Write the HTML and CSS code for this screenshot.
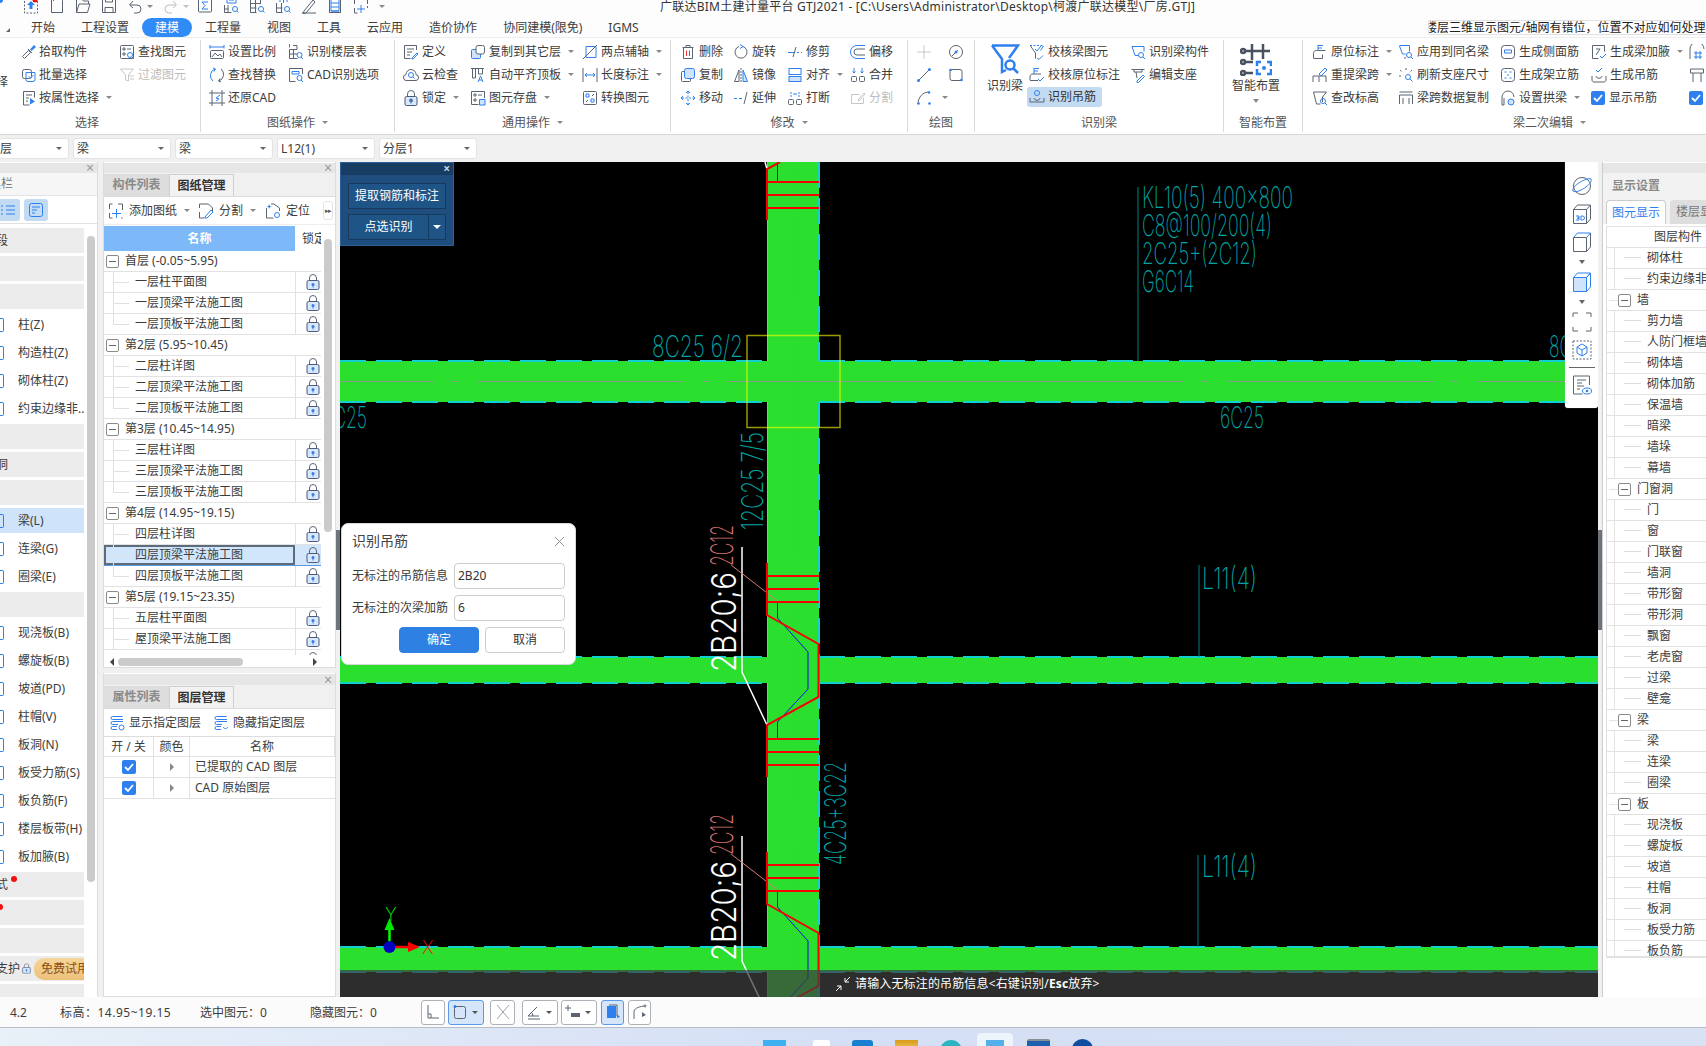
FILE: index.html
```html
<!DOCTYPE html>
<html lang="zh-CN">
<head>
<meta charset="utf-8">
<title>广联达BIM土建计量平台 GTJ2021</title>
<link rel="stylesheet" href="styles.css">
</head>
<body>
<svg class="defs" width="0" height="0">
  <symbol id="lock" viewBox="0 0 14 16"><path d="M3.5 7V4a3.5 3.5 0 0 1 7 0v3" fill="none" stroke="#5c6678"/><rect x="1" y="6.5" width="12" height="9" rx="1.5" fill="#d8e7fb" stroke="#4a5a78"/><circle cx="7" cy="10.5" r="1.5" fill="#2e80ee"/><path d="M7 11v2.5" stroke="#2e80ee"/></symbol>
  <symbol id="chk" viewBox="0 0 14 14"><rect width="14" height="14" rx="2" fill="#2e80ee"/><path d="M3 7l3 3 5-6" fill="none" stroke="#fff" stroke-width="1.8"/></symbol>
</svg>

<header class="top">
  <div class="qa">
    <i class="logo"></i>
    <svg class="q" viewBox="0 0 16 16"><path d="M1.5 3v12h13V3M1.5 3" stroke-dasharray="2 1.5"/><path class="fb" d="M8 3l4 4H9.5v4h-3V7H4z"/><circle class="red" cx="12" cy="2" r="2.5"/></svg>
    <svg class="q" viewBox="0 0 16 16"><path d="M2.5 0v14.5h11V2.5L11 0"/><path class="b" d="M3 1h3M4.5 0v3"/></svg>
    <svg class="q" viewBox="0 0 16 16"><path d="M1.5 14.5V1h5l2 2h5v3M1.5 14.5h11l2.5-8.500H4z"/></svg>
    <svg class="q" viewBox="0 0 16 16"><path d="M1.5 14.5V1h13v13.500zM4 14V9.500h8V14M4.500 1v3h7V1"/></svg>
    <span class="qg"><svg class="q" viewBox="0 0 16 16"><path d="M3 7h7a4 4 0 0 1 0 8H7M6 3L2.500 7 6 10"/></svg><i class="ar"></i></span>
    <span class="qg off"><svg class="q" viewBox="0 0 16 16"><path d="M13 7H6a4 4 0 0 0 0 8h3M10 3l3.500 4L10 10"/></svg><i class="ar"></i></span>
    <svg class="q qs" viewBox="0 0 16 16"><rect x="1.500" y="1" width="13" height="13" rx="1"/><path class="b" d="M11 4H5l3 3.500L5 11h6"/></svg>
    <svg class="q" viewBox="0 0 16 16"><path d="M1.500 7v7.500h7M1.500 11h4M5 7v7"/><path class="b" d="M4 0v5h9V0M6 2h5"/><circle class="b" cx="12" cy="11" r="2.500"/><path class="b" d="M14 13l1.500 1.500"/></svg>
    <svg class="q" viewBox="0 0 16 16"><path d="M1.500 1h10v5M1.500 1v13.500h6M1.500 5.500h10M1.500 10h6M6.500 1v13"/><circle class="b" cx="12" cy="11" r="2.500"/><path class="b" d="M14 13l1.500 1.500"/></svg>
    <svg class="q" viewBox="0 0 16 16"><path d="M1.500 5v9.500h6M1.500 10h6M6.500 5v9"/><path class="b" d="M5 4V0h7v4M8.500 0v5"/><circle class="b" cx="12" cy="11" r="2.500"/><path class="b" d="M14 13l1.500 1.500"/></svg>
    <svg class="q" viewBox="0 0 16 16"><path d="M3 13L12 2l2 2-9 11-3 .5zM1 15h14"/></svg>
    <svg class="q" viewBox="0 0 16 16"><path d="M2.500 0v15M13.500 0v15M2.500 14.500h11"/><path class="b" d="M4 0v13h8V0M4 5h8M4 9h8M4 13h8"/></svg>
    <svg class="q" viewBox="0 0 16 16"><path d="M1.500 6V1h3M14.500 6V1h-3M1.500 10v5h3M14.500 8v2"/><path class="b" d="M8 7v8M4 11h8"/></svg>
    <i class="ar dn"></i>
  </div>
  <div class="title">广联达BIM土建计量平台 GTJ2021 - [C:\Users\Administrator\Desktop\柯渡广联达模型\厂房.GTJ]</div>
</header>

<nav class="menu">
  <i class="corner"></i>
  <div class="tabs">
    <span>开始</span><span>工程设置</span><span class="on">建模</span><span>工程量</span><span>视图</span><span>工具</span><span>云应用</span><span>造价协作</span><span>协同建模(限免)</span><span>IGMS</span>
  </div>
  <div class="notice"><span>楼层三维显示图元/轴网有错位，位置不对应如何处理</span></div>
</nav>

<section class="ribbon">
  <div class="grp g1">
    <div class="body">
      <div class="frag"><span>选择</span></div>
      <div class="col c1">
        <div class="it"><svg class="i" viewBox="0 0 16 16"><path d="M3 14l-1.500-1.500 6-6 2 2-6 6zM7 5l4 4"/><path class="fb" d="M9 5.500l4-4.500 2 2-4.500 4z"/></svg>拾取构件</div>
        <div class="it"><svg class="i" viewBox="0 0 16 16"><rect x="1.500" y="2.500" width="9" height="9" rx="2"/><path class="b" d="M5 5.500h9v7a2 2 0 0 1-2 2H7a2 2 0 0 1-2-2zM7.500 9l2 2 3-3"/></svg>批量选择</div>
        <div class="it"><svg class="i" viewBox="0 0 16 16"><path d="M2.500 15V1.500h11v6M2.500 15h6M5 5h6M5 8h3M5 11h2"/><path class="fb" d="M9 8l5 3.500-5 3z"/></svg>按属性选择<i class="ar"></i></div>
      </div>
      <div class="col">
        <div class="it"><svg class="i" viewBox="0 0 16 16"><rect x="1.500" y="1.500" width="13" height="13" rx="1"/><path d="M4 4h2v2H4zM8 5h4M4 9h2v2H4z"/><circle class="b" cx="11" cy="11" r="2.500"/><path class="b" d="M13 13l2 2"/></svg>查找图元</div>
        <div class="it off"><svg class="i" viewBox="0 0 16 16"><path d="M1.500 2h13l-5 6v6l-3-1V8zM10 9h5M11 12h4"/></svg>过滤图元</div>
      </div>
    </div>
    <div class="lbl">选择</div>
  </div>

  <div class="grp g2">
    <div class="body">
      <div class="col c1">
        <div class="it"><svg class="i" viewBox="0 0 16 16"><path class="b" d="M1 1v3.500M15 1v3.500M1 3h14"/><rect x="1.500" y="6.500" width="13" height="8" rx="1"/><path d="M3 13l3-4 3 3 2-2 2 3"/></svg>设置比例</div>
        <div class="it"><svg class="i" viewBox="0 0 16 16"><path class="b" d="M6 2a7 7 0 0 0-2 12M4 1l2.500 1L5 4.500"/><path d="M10 14a7 7 0 0 0 2-12M12 15l-2.500-1 1.500-2.500"/></svg>查找替换</div>
        <div class="it"><svg class="i" viewBox="0 0 16 16"><path d="M3 0v16M13 0v16M0 3h16M0 13h16"/><path class="b" d="M11 5L7 8l3 1-3 2"/></svg>还原CAD</div>
      </div>
      <div class="col">
        <div class="it"><svg class="i" viewBox="0 0 16 16"><path d="M1.500 5.500v9h8M1.500 10h8M5.500 5.500v9M5 1.500h4v4H1.500"/><circle class="b" cx="11.500" cy="11" r="2.500"/><path class="b" d="M13 13l2 2M1.500 0v3.500"/></svg>识别楼层表</div>
        <div class="it"><svg class="i" viewBox="0 0 16 16"><path d="M14.500 7V1.500h-13v13h6"/><path class="b" d="M4 4.500h7v2.500H4z"/><circle class="b" cx="11.500" cy="11" r="2.500"/><path class="b" d="M13 13l2 2"/></svg>CAD识别选项</div>
      </div>
    </div>
    <div class="lbl">图纸操作<i class="ar"></i></div>
  </div>

  <div class="grp g3">
    <div class="body">
      <div class="col c1">
        <div class="it"><svg class="i" viewBox="0 0 16 16"><path d="M13.500 6V1.500h-12v13h6M4 5h7M4 8h5M4 11h3"/><path class="b" d="M9 14l5-5 1 1-5 5H9z"/></svg>定义</div>
        <div class="it"><svg class="i" viewBox="0 0 16 16"><path d="M4 13.500a3 3 0 0 1-1-6 5 5 0 0 1 10 0 3 3 0 0 1-1 6z"/><circle class="b" cx="8" cy="8" r="2.500"/><path class="b" d="M10 10l1.500 1.500"/></svg>云检查</div>
        <div class="it"><svg class="i" viewBox="0 0 16 16"><use href="#lock"/></svg>锁定<i class="ar"></i></div>
      </div>
      <div class="col c2">
        <div class="it"><svg class="i" viewBox="0 0 16 16"><rect class="b fl" x="1.500" y="5.500" width="9" height="9" rx="1"/><rect class="wf" x="6" y="1.500" width="8.500" height="8.500" rx="2"/></svg>复制到其它层<i class="ar"></i></div>
        <div class="it"><svg class="i" viewBox="0 0 16 16"><path d="M1 1.500h13M2.500 2v9h3V2M8.500 2v5h4V2"/><path class="b" d="M8 15l2.500-6 2.500 6M9 13h3"/></svg>自动平齐顶板<i class="ar"></i></div>
        <div class="it"><svg class="i" viewBox="0 0 16 16"><path d="M14.500 8V1.500h-13v13h7M4 4h2v2H4zM8 5h4M4 9h2v2H4z"/><path class="b fl" d="M9.500 9.500h5.500v5.500H9.500z"/></svg>图元存盘<i class="ar"></i></div>
      </div>
      <div class="col">
        <div class="it"><svg class="i" viewBox="0 0 16 16"><path class="b" d="M4 2.500v11h10v-11z"/><path d="M1 15L15 1"/></svg>两点辅轴<i class="ar"></i></div>
        <div class="it"><svg class="i" viewBox="0 0 16 16"><path d="M1 1v14M15 1v14"/><path class="b" d="M3 8h10M5 6L3 8l2 2M11 6l2 2-2 2"/></svg>长度标注<i class="ar"></i></div>
        <div class="it"><svg class="i" viewBox="0 0 16 16"><rect x="1.500" y="1.500" width="13" height="13" rx="1"/><path class="b" d="M4 4h3v3H4zM9 9h3v3H9z"/><path d="M12 4l-2 2M4 12l2-2"/></svg>转换图元</div>
      </div>
    </div>
    <div class="lbl">通用操作<i class="ar"></i></div>
  </div>

  <div class="grp g4">
    <div class="body">
      <div class="col c1">
        <div class="it"><svg class="i" viewBox="0 0 16 16"><path d="M2.500 3.500h11M6 3V1.500h4V3M3.500 4v10.500h9V4"/><path class="r" d="M6.500 6.500v5.500M9.500 6.500v5.500"/></svg>删除</div>
        <div class="it"><svg class="i" viewBox="0 0 16 16"><rect x="1.500" y="4.500" width="9" height="10" rx="1"/><rect class="b fl" x="4.500" y="1.500" width="10" height="10" rx="2"/></svg>复制</div>
        <div class="it"><svg class="i" viewBox="0 0 16 16"><path class="b" stroke-dasharray="2 1.500" d="M8 2v12M2 8h12"/><path class="b" d="M6 3l2-2 2 2M6 13l2 2 2-2M3 6L1 8l2 2M13 6l2 2-2 2"/></svg>移动</div>
      </div>
      <div class="col c2">
        <div class="it"><svg class="i" viewBox="0 0 16 16"><path d="M10 2.500a6 6 0 1 1-4 0"/><path class="b" d="M7 .5l3 2-3 2"/></svg>旋转</div>
        <div class="it"><svg class="i" viewBox="0 0 16 16"><path d="M6 3L1.500 14.500H6z"/><path class="b fl" d="M10 3l4.500 11.500H10z"/><path d="M8 1v14" stroke-dasharray="2 1"/></svg>镜像</div>
        <div class="it"><svg class="i" viewBox="0 0 16 16"><path class="b" stroke-dasharray="3 2" d="M1 8.500h9"/><path d="M14 2l-3 12"/></svg>延伸</div>
      </div>
      <div class="col c3">
        <div class="it"><svg class="i" viewBox="0 0 16 16"><path class="b" d="M1 8.500h6M10 8.500h2M14 8.500h1"/><path d="M9 3l-3 10"/></svg>修剪</div>
        <div class="it"><svg class="i" viewBox="0 0 16 16"><rect class="b" x="2" y="1.500" width="12" height="6"/><rect class="b fl" x="2" y="9.500" width="12" height="5"/></svg>对齐<i class="ar"></i></div>
        <div class="it"><svg class="i" viewBox="0 0 16 16"><rect x="1.500" y="9.500" width="5" height="5" rx="1"/><rect x="9.500" y="9.500" width="5" height="5" rx="1"/><path class="b" d="M4 2v2M4 5v2M12 2v2M12 5v2M6 4h4"/></svg>打断</div>
      </div>
      <div class="col">
        <div class="it"><svg class="i" viewBox="0 0 16 16"><path class="b" d="M15 1.500H7a6.500 6.500 0 0 0 0 13h8"/><path d="M15 5H7a3 3 0 0 0 0 6h8"/></svg>偏移</div>
        <div class="it"><svg class="i" viewBox="0 0 16 16"><rect x="1.500" y="9.500" width="5" height="5" rx="1"/><rect x="9.500" y="9.500" width="5" height="5" rx="1"/><path class="b" d="M4 1v5M2.500 4.500L4 6l1.500-1.500M12 1v5M10.500 4.500L12 6l1.500-1.500"/></svg>合并</div>
        <div class="it off"><svg class="i" viewBox="0 0 16 16"><path d="M1.500 4.500h8M1.500 4.500v9h12V8M8 10l6-7 1 1-6 7z"/></svg>分割</div>
      </div>
    </div>
    <div class="lbl">修改<i class="ar"></i></div>
  </div>

  <div class="grp g5">
    <div class="body">
      <div class="col c1">
        <div class="it"><svg class="i off" viewBox="0 0 16 16"><path d="M8 1v5M8 10v5M1 8h5M10 8h5"/><circle class="gf" cx="8" cy="8" r="1.500"/></svg></div>
        <div class="it"><svg class="i" viewBox="0 0 16 16"><path d="M2 14L14 2"/><circle class="bf" cx="2.500" cy="13.500" r="1.500"/><circle class="bf" cx="13.500" cy="2.500" r="1.500"/></svg></div>
        <div class="it"><svg class="i" viewBox="0 0 16 16"><path d="M2 14C2 7 7 2 13 2"/><circle class="bf" cx="2.500" cy="13.500" r="1.300"/><circle class="bf" cx="13.500" cy="13.500" r="1.300"/><circle class="bf" cx="13" cy="2.500" r="1.300"/></svg><i class="ar"></i></div>
      </div>
      <div class="col">
        <div class="it"><svg class="i" viewBox="0 0 16 16"><circle cx="8" cy="8" r="6.500"/><path d="M4 12l6-6"/><circle class="bf" cx="8" cy="8" r="1.500"/></svg></div>
        <div class="it"><svg class="i" viewBox="0 0 16 16"><rect x="2" y="2.500" width="12" height="11" rx="2"/><circle class="bf" cx="2.500" cy="3" r="1.300"/><circle class="bf" cx="13.500" cy="13" r="1.300"/></svg></div>
      </div>
    </div>
    <div class="lbl">绘图</div>
  </div>

  <div class="grp g6">
    <div class="body">
      <div class="big bigb">
        <svg class="bi" viewBox="0 0 30 32"><path class="b2" d="M2 2.500h26L19 15M2 2.500L12 16v13l4-2"/><circle class="b2" cx="20" cy="22" r="4.500"/><path class="b2" d="M23.500 25.500L28 30"/></svg>
        <span>识别梁</span>
      </div>
      <div class="col c2">
        <div class="it"><svg class="i" viewBox="0 0 16 16"><path class="b" stroke-dasharray="2 1.500" d="M1 1.500h14"/><path d="M1.500 2l5 7v5.500"/><path class="b" d="M14.500 2l-3 4.500M6 5l2 2 4-5M8 14l2 1.500 4-4"/></svg>校核梁图元</div>
        <div class="it"><svg class="i" viewBox="0 0 16 16"><path d="M1 13v-3c0-2 1-3 3-3h8M1 13.500h8"/><path class="b" d="M5 1v6M5 1.500h5M5 4h4M9 12l2 2 4-4"/></svg>校核原位标注</div>
        <div class="it sel"><svg class="i" viewBox="0 0 16 16"><circle class="b" cx="8" cy="4" r="2.500"/><path d="M1 9v4h14V9M5 9c0 3 6 3 6 0"/></svg>识别吊筋</div>
      </div>
      <div class="col">
        <div class="it"><svg class="i" viewBox="0 0 16 16"><path class="b" d="M2 2.500h12v5M2 2.500l3 9h3"/><circle class="b" cx="11" cy="11" r="2.500"/><path class="b" d="M13 13l2 2"/></svg>识别梁构件</div>
        <div class="it"><svg class="i" viewBox="0 0 16 16"><path d="M1.500 2.500h13M4 3v2h8V3M6 5l1 6"/><path class="b" d="M7 14l6-6 1.500 1.500-6 6H7z"/></svg>编辑支座</div>
      </div>
    </div>
    <div class="lbl">识别梁</div>
  </div>

  <div class="grp g7">
    <div class="body">
      <div class="big bigs">
        <svg class="bi2" viewBox="0 0 32 33"><path class="k2" d="M5 8h25M12 1v16M23 1v15M5 19h8M5 30h8"/><circle class="k2" cx="3" cy="8" r="2"/><circle class="k2" cx="3" cy="19" r="2"/><circle class="k2" cx="3" cy="30" r="2"/><path class="b3" d="M17 23v-4h4M31 23v-4h-4M17 26v5h4M31 26v5h-4"/><circle class="bf" cx="24" cy="25" r="2"/></svg>
        <span>智能布置</span>
        <i class="ar"></i>
      </div>
    </div>
    <div class="lbl">智能布置</div>
  </div>

  <div class="grp g8">
    <div class="body">
      <div class="col c1">
        <div class="it"><svg class="i" viewBox="0 0 16 16"><path d="M1.500 14V9.500c0-2 1-3 3-3h9M1.500 14.500h9v-4"/><path class="b" d="M6 1v5.500M6 1.500h5M6 4h4"/></svg>原位标注<i class="ar"></i></div>
        <div class="it"><svg class="i" viewBox="0 0 16 16"><path d="M1 15V9h13v6M7 9v6"/><path class="b" d="M7 7l6-6 2 2-6 6z"/></svg>重提梁跨<i class="ar"></i></div>
        <div class="it"><svg class="i" viewBox="0 0 16 16"><path d="M1.500 2h13l-4 5v5M1.500 2l3 12h4"/><circle class="b" cx="11" cy="11" r="2.500"/><path class="b" d="M13 13l2 2"/></svg>查改标高</div>
      </div>
      <div class="col c2">
        <div class="it"><svg class="i" viewBox="0 0 16 16"><path class="b" d="M1.500 1.500h10v6M1.500 2l3 8h3"/><path d="M7 13v2"/><circle class="b" cx="11" cy="11" r="2.500"/><path class="b" d="M13 13l2 2"/></svg>应用到同名梁</div>
        <div class="it"><svg class="i" viewBox="0 0 16 16"><path d="M2 3l2 2M8 1v2M14 3l-2 2M1 9h2" stroke-dasharray="2 1"/><circle class="b" cx="10" cy="10" r="2.500"/><path class="b" d="M12 12l2.500 2.500"/></svg>刷新支座尺寸</div>
        <div class="it"><svg class="i" viewBox="0 0 16 16"><path d="M1.500 5h13M1.500 5v9M14.500 5v9M5 8v6M11 8v6M1.500 2h13"/></svg>梁跨数据复制</div>
      </div>
      <div class="col c3">
        <div class="it"><svg class="i" viewBox="0 0 16 16"><rect x="1.500" y="1.500" width="13" height="13" rx="3"/><path class="b" d="M4.500 6h7M4.500 6v3h7V6"/></svg>生成侧面筋</div>
        <div class="it"><svg class="i" viewBox="0 0 16 16"><rect x="1.500" y="1.500" width="13" height="13" rx="3"/><path class="b" stroke-dasharray="2 3" d="M4.500 5h7M4.500 11h7"/><path class="b" d="M7 8h2"/></svg>生成架立筋</div>
        <div class="it"><svg class="i" viewBox="0 0 16 16"><path d="M2 15V7a6 6 0 0 1 12 0M2 15h2M4 15V8"/><circle class="b fl" cx="11" cy="12" r="3"/></svg>设置拱梁<i class="ar"></i></div>
      </div>
      <div class="col c4">
        <div class="it"><svg class="i" viewBox="0 0 16 16"><path d="M1.500 1.500h12v6M1.500 1.500v13h6M5 5h4L5 11"/><path class="b" d="M9 12l2 2 4-4"/></svg>生成梁加腋<i class="ar"></i></div>
        <div class="it"><svg class="i" viewBox="0 0 16 16"><path d="M1 9v4c0 1 1 2 2 2h10c1 0 2-1 2-2V9M5 9c0 3 6 3 6 0"/><path class="b" d="M5 3l2 2 4-4"/></svg>生成吊筋</div>
        <div class="it"><svg class="ck" viewBox="0 0 14 14"><use href="#chk"/></svg>显示吊筋</div>
      </div>
      <div class="col">
        <div class="it"><svg class="i" viewBox="0 0 16 16"><path d="M1 15V5a7 7 0 0 1 14 0"/><path class="b" d="M6 8h2v2H6zM10 8h2v2h-2zM6 12h2v2H6zM10 12h2v2h-2z"/></svg></div>
        <div class="it"><svg class="i" viewBox="0 0 16 16"><path d="M1.500 2h13v4h-13zM4 6v9M12 6v9"/></svg></div>
        <div class="it"><svg class="ck" viewBox="0 0 14 14"><use href="#chk"/></svg></div>
      </div>
    </div>
    <div class="lbl lblr">梁二次编辑<i class="ar"></i></div>
  </div>
</section>

<div class="combos">
  <div class="cmb c0"><span>层</span><i class="ar"></i></div>
  <div class="cmb"><span>梁</span><i class="ar"></i></div>
  <div class="cmb"><span>梁</span><i class="ar"></i></div>
  <div class="cmb"><span>L12(1)</span><i class="ar"></i></div>
  <div class="cmb"><span>分层1</span><i class="ar"></i></div>
</div>

<main class="main">
  <aside class="p1">
    <div class="strip"><span class="x">×</span></div>
    <div class="p1t"><span>工具栏</span></div>
    <div class="p1b">
      <span class="tg tg1"><svg viewBox="0 0 16 16" class="tgi"><path class="b" d="M6 4h9M6 8h9M6 12h9M1 4h2M1 8h2M1 12h2"/></svg></span>
      <span class="tg"><svg viewBox="0 0 16 16" class="tgi"><rect class="b" x="1.500" y="1.500" width="13" height="13" rx="2"/><path class="b" d="M4 5h8M4 8h5M4 11h3"/></svg></span>
    </div>
    <div class="p1l">
      <div class="list">
        <div class="cat"><span class="clip">分段</span></div>
        <div class="cat"></div>
        <div class="cat"></div>
        <div class="itm"><i class="bit"></i>柱(Z)</div>
        <div class="itm"><i class="bit"></i>构造柱(Z)</div>
        <div class="itm"><i class="bit"></i>砌体柱(Z)</div>
        <div class="itm"><i class="bit"></i>约束边缘非..</div>
        <div class="cat"></div>
        <div class="cat"><span class="clip">门窗洞</span></div>
        <div class="cat"></div>
        <div class="itm cur"><i class="bit"></i>梁(L)</div>
        <div class="itm"><i class="bit"></i>连梁(G)</div>
        <div class="itm"><i class="bit"></i>圈梁(E)</div>
        <div class="cat"></div>
        <div class="itm"><i class="bit"></i>现浇板(B)</div>
        <div class="itm"><i class="bit"></i>螺旋板(B)</div>
        <div class="itm"><i class="bit"></i>坡道(PD)</div>
        <div class="itm"><i class="bit"></i>柱帽(V)</div>
        <div class="itm"><i class="bit"></i>板洞(N)</div>
        <div class="itm"><i class="bit"></i>板受力筋(S)</div>
        <div class="itm"><i class="bit"></i>板负筋(F)</div>
        <div class="itm"><i class="bit"></i>楼层板带(H)</div>
        <div class="itm"><i class="bit"></i>板加腋(B)</div>
        <div class="cat"><span class="clip">装配式</span><i class="rd"></i></div>
        <div class="cat"><i class="rd rd0"></i></div>
        <div class="cat"></div>
        <div class="cat"><span class="clip clipw">基坑支护</span><svg class="lk2" viewBox="0 0 14 16"><use href="#lock"/></svg><span class="pill">免费试用</span></div>
        <div class="cat"></div>
      </div>
      <div class="vs vs1"><i></i></div>
    </div>
  </aside>

  <div class="p2col">
    <section class="p2">
      <div class="strip"><span class="x">×</span></div>
      <div class="ptabs"><span class="pt">构件列表</span><span class="pt on">图纸管理</span></div>
      <div class="ptb">
        <span class="tb tb1"><svg class="i" viewBox="0 0 16 16"><path d="M1.500 6V1h3M10 1h4.500v6M1.500 10v5h3M13 15h1.500"/><path class="b" d="M8.500 6v9M4 10.500h9"/></svg>添加图纸<i class="ar"></i></span>
        <span class="tb tb2"><svg class="i" viewBox="0 0 16 16"><path d="M1.500 5V1h9l4 4v3M1.500 9v6h5"/><path class="b" d="M7 14l6-7 2 2-6 6H7z"/></svg>分割<i class="ar"></i></span>
        <span class="tb tb3"><svg class="i" viewBox="0 0 16 16"><path d="M1.500 5v10h7M6 1h3l5.500 4v3"/><circle class="b" cx="12" cy="12" r="2.500"/><path class="fb" d="M4 1l1 2 2 .5-2 .5-1 2-.5-2-2-.5 2-.5z"/></svg>定位</span>
        <span class="more">▸▸</span>
      </div>
      <div class="tblwrap">
        <div class="tbl">
          <div class="thead"><span class="hn">名称</span><span class="hl">锁定</span></div>
          <div class="tbody">
            <div class="row grow"><i class="mn"></i>首层 (-0.05~5.95)</div>
            <div class="row"><span class="nm ch">一层柱平面图</span><span class="lk"><svg viewBox="0 0 14 16"><use href="#lock"/></svg></span></div>
            <div class="row"><span class="nm ch">一层顶梁平法施工图</span><span class="lk"><svg viewBox="0 0 14 16"><use href="#lock"/></svg></span></div>
            <div class="row"><span class="nm ch last">一层顶板平法施工图</span><span class="lk"><svg viewBox="0 0 14 16"><use href="#lock"/></svg></span></div>
            <div class="row grow"><i class="mn"></i>第2层 (5.95~10.45)</div>
            <div class="row"><span class="nm ch">二层柱详图</span><span class="lk"><svg viewBox="0 0 14 16"><use href="#lock"/></svg></span></div>
            <div class="row"><span class="nm ch">二层顶梁平法施工图</span><span class="lk"><svg viewBox="0 0 14 16"><use href="#lock"/></svg></span></div>
            <div class="row"><span class="nm ch last">二层顶板平法施工图</span><span class="lk"><svg viewBox="0 0 14 16"><use href="#lock"/></svg></span></div>
            <div class="row grow"><i class="mn"></i>第3层 (10.45~14.95)</div>
            <div class="row"><span class="nm ch">三层柱详图</span><span class="lk"><svg viewBox="0 0 14 16"><use href="#lock"/></svg></span></div>
            <div class="row"><span class="nm ch">三层顶梁平法施工图</span><span class="lk"><svg viewBox="0 0 14 16"><use href="#lock"/></svg></span></div>
            <div class="row"><span class="nm ch last">三层顶板平法施工图</span><span class="lk"><svg viewBox="0 0 14 16"><use href="#lock"/></svg></span></div>
            <div class="row grow"><i class="mn"></i>第4层 (14.95~19.15)</div>
            <div class="row"><span class="nm ch">四层柱详图</span><span class="lk"><svg viewBox="0 0 14 16"><use href="#lock"/></svg></span></div>
            <div class="row act"><span class="nm ch">四层顶梁平法施工图</span><span class="lk"><svg viewBox="0 0 14 16"><use href="#lock"/></svg></span></div>
            <div class="row"><span class="nm ch last">四层顶板平法施工图</span><span class="lk"><svg viewBox="0 0 14 16"><use href="#lock"/></svg></span></div>
            <div class="row grow"><i class="mn"></i>第5层 (19.15~23.35)</div>
            <div class="row"><span class="nm ch">五层柱平面图</span><span class="lk"><svg viewBox="0 0 14 16"><use href="#lock"/></svg></span></div>
            <div class="row"><span class="nm ch">屋顶梁平法施工图</span><span class="lk"><svg viewBox="0 0 14 16"><use href="#lock"/></svg></span></div>
            <div class="row"><span class="nm"></span><span class="lk"><svg viewBox="0 0 14 16"><use href="#lock"/></svg></span></div>
          </div>
          <div class="hs"><i class="hl1"></i><i class="hth"></i><i class="hl2"></i></div>
        </div>
        <div class="vs vs2"><i></i></div>
      </div>
    </section>

    <section class="p3">
      <div class="strip"><span class="x">×</span></div>
      <div class="ptabs"><span class="pt">属性列表</span><span class="pt on">图层管理</span></div>
      <div class="ptb ptb3">
        <span class="tb tc1"><svg class="i" viewBox="0 0 16 16"><path class="b" d="M2 3a1.500 1.500 0 0 1 1.500-1.500h10M2 3a1.500 1.500 0 0 0 1.500 1.500H14M2 8a1.500 1.500 0 0 1 1.500-1.500H14M2 8a1.500 1.500 0 0 0 1.500 1.500H9M2 13a1.500 1.500 0 0 1 1.500-1.500H8M2 13a1.500 1.500 0 0 0 1.500 1.500H8"/><circle class="b" cx="12.500" cy="12.500" r="2.500"/></svg>显示指定图层</span>
        <span class="tb"><svg class="i" viewBox="0 0 16 16"><path class="b" d="M2 3a1.500 1.500 0 0 1 1.500-1.500h10M2 3a1.500 1.500 0 0 0 1.500 1.500H14M2 8a1.500 1.500 0 0 1 1.500-1.500H14M2 8a1.500 1.500 0 0 0 1.500 1.500H9M2 13a1.500 1.500 0 0 1 1.500-1.500H8M2 13a1.500 1.500 0 0 0 1.500 1.500H8M10 12c1.500 2 3.500 2 5 0"/></svg>隐藏指定图层</span>
      </div>
      <div class="lt">
        <div class="lr lh"><span>开 / 关</span><span>颜色</span><span>名称</span></div>
        <div class="lr"><span><svg class="ck" viewBox="0 0 14 14"><use href="#chk"/></svg></span><span><i class="tri"></i></span><span class="ln">已提取的 CAD 图层</span></div>
        <div class="lr"><span><svg class="ck" viewBox="0 0 14 14"><use href="#chk"/></svg></span><span><i class="tri"></i></span><span class="ln">CAD 原始图层</span></div>
      </div>
    </section>
  </div>

  <div class="split"><i></i></div>

  <section class="canvas">
    <svg class="cad" viewBox="340 162 1258 835">
      <rect x="340" y="162" width="1258" height="835" fill="#000"/>
      <rect class="gr" x="767" y="162" width="52" height="835"/>
      <rect class="gr" x="340" y="361" width="1258" height="41"/>
      <rect class="gr" x="340" y="657" width="1258" height="26"/>
      <rect class="gr" x="340" y="947" width="1258" height="25"/>

      <path class="cy" d="M767 162V361M767 402V657M767 683V947M767 972V997"/>
      <path class="cyd" d="M819 162V361M819 402V657M819 683V947M819 972V997"/>
      <path class="cyd" d="M340 361H767M819 361H1598M340 402H767M819 402H1598"/>
      <path class="cyd" d="M340 657H767M819 657H1598M340 683H767M819 683H1598M340 947H767M819 947H1598M340 972H767M819 972H1598"/>

      <path class="cl" d="M340 381H433M452 381h6M478 381H684M703 381h6M727 381H1184M1202 381h6M1228 381H1433M1452 381h6M1477 381H1598"/>
      <path class="cl" d="M793 162V300M793 322v3M793 345V551M793 595V802M793 843V997"/>

      <path class="yl" d="M747 335.500H840V427.500H747Z"/>

      <path class="blu" d="M777.500 162V181"/>
      <path class="wh" d="M765 162l2 7"/>
      <path class="rd2" d="M767 220V169L780 162M767 182H819M767 195H819M767 208H819"/>

      <g id="hanger">
        <path class="blu" d="M777.500 602V618L808 652V689L777.500 722V738"/>
        <path class="wh" d="M742 547V672L767 725"/>
        <path class="pk" d="M731 565L777.500 601"/>
        <path class="rd2" d="M767 563V615L818.500 644V697L767 725V777M767 576H819M767 589H819M767 602H819M767 739H819M767 752H819M767 765H819"/>
      </g>
      <use href="#hanger" y="289"/>

      <path class="tl" d="M1138 187V361M1199 565V657M1198 855V947"/>

      <text class="t" x="1142" y="208" textLength="151" lengthAdjust="spacingAndGlyphs">KL10(5) 400x800</text>
      <text class="t" x="1142" y="236" textLength="130" lengthAdjust="spacingAndGlyphs">C8@100/200(4)</text>
      <text class="t" x="1142" y="264" textLength="115" lengthAdjust="spacingAndGlyphs">2C25+(2C12)</text>
      <text class="t" x="1142" y="292" textLength="52" lengthAdjust="spacingAndGlyphs">G6C14</text>
      <text class="t" x="652" y="357" textLength="91" lengthAdjust="spacingAndGlyphs">8C25 6/2</text>
      <text class="t" x="1549" y="357" textLength="23" lengthAdjust="spacingAndGlyphs">8C</text>
      <text class="t" x="323" y="428" textLength="44" lengthAdjust="spacingAndGlyphs">6C25</text>
      <text class="t" x="1220" y="428" textLength="44" lengthAdjust="spacingAndGlyphs">6C25</text>
      <text class="t" x="1202" y="589" textLength="55" lengthAdjust="spacingAndGlyphs">L11(4)</text>
      <text class="t" x="1202" y="877" textLength="55" lengthAdjust="spacingAndGlyphs">L11(4)</text>
      <text class="t" transform="translate(763 530) rotate(-90)" textLength="98" lengthAdjust="spacingAndGlyphs">12C25 7/5</text>
      <text class="t" transform="translate(846 865) rotate(-90)" textLength="103" lengthAdjust="spacingAndGlyphs">4C25+3C22</text>

      <text class="tp" transform="translate(733 566) rotate(-90)" textLength="41" lengthAdjust="spacingAndGlyphs">2C12</text>
      <text class="tw" transform="translate(736 672) rotate(-90)" textLength="100" lengthAdjust="spacingAndGlyphs">2B20;6</text>
      <text class="tp" transform="translate(733 855) rotate(-90)" textLength="41" lengthAdjust="spacingAndGlyphs">2C12</text>
      <text class="tw" transform="translate(736 961) rotate(-90)" textLength="100" lengthAdjust="spacingAndGlyphs">2B20;6</text>

      <path class="ax-g" d="M389.500 945V930"/>
      <path class="ax-gf" d="M389.500 918l5 12h-10z"/>
      <path class="ax-r" d="M392 947H410"/>
      <path class="ax-rf" d="M420 947l-12-5v10z"/>
      <circle cx="389.500" cy="947" r="6" fill="#0000c0"/>
      <text class="ay" x="385" y="921">Y</text>
      <text class="ax" x="422" y="954">X</text>
    </svg>

    <div class="fl-panel">
      <div class="fl-h"><span>×</span></div>
      <div class="fl-b">提取钢筋和标注</div>
      <div class="fl-s"><span class="fl-m">点选识别</span><span class="fl-a"></span></div>
    </div>

    <div class="dlg">
      <div class="dlg-h"><span>识别吊筋</span><svg class="dlg-x" viewBox="0 0 12 12"><path d="M1 1l10 10M11 1L1 11"/></svg></div>
      <div class="dlg-r"><label>无标注的吊筋信息</label><span class="inp">2B20</span></div>
      <div class="dlg-r"><label>无标注的次梁加筋</label><span class="inp">6</span></div>
      <div class="dlg-f"><span class="btn pri">确定</span><span class="btn">取消</span></div>
    </div>

    <div class="pal">
      <svg class="pi" viewBox="0 0 20 20"><ellipse cx="10" cy="10" rx="8.500" ry="8.500"/><path class="b" d="M1 15C-1 10 15 1 19 3c1 2-1 5-5 8-4 3-10 6-13 4z"/></svg>
      <svg class="pi" viewBox="0 0 20 20"><path d="M1.500 5.500h13v14h-13zM1.500 5.500l4-4.500h13v14l-4 4.500M14.500 5.500l4-4.500"/><path class="b" d="M4 12h3v2H5h2v2H4M9 12v4h1.500a2 2 0 0 0 0-4z"/></svg>
      <svg class="pi pi3" viewBox="0 0 20 20"><path d="M1.500 5.500h13v14h-13zM14.500 19.500l4-4.500V1"/><path class="b" d="M1.500 5.500l4-4.500h13l-4 4.500"/></svg>
      <i class="par"></i>
      <svg class="pi pi4" viewBox="0 0 20 20"><path class="fl b" d="M1.500 5.500h13v14h-13z"/><path class="b" d="M1.500 5.500l4-4.500h13l-4 4.500M14.500 19.500l4-4.500V1M14.500 5.500l4-4.500"/></svg>
      <i class="par"></i>
      <svg class="pi pi5" viewBox="0 0 20 20"><path d="M1 5V1h5M14 1h5v4M1 15v4h5M14 19h5v-4"/></svg>
      <svg class="pi pi6" viewBox="0 0 20 20"><path stroke-dasharray="2 1.500" d="M1 1h18v18H1z"/><path class="b" d="M10 4l5 3v6l-5 3-5-3V7zM5 7l5 3 5-3M10 10v6"/></svg>
      <i class="psep"></i>
      <svg class="pi" viewBox="0 0 20 20"><path d="M17.500 10V1h-16v18h9M5 5h9M5 8h5M5 11h7M5 14h3"/><ellipse class="b" cx="15" cy="16" rx="4.500" ry="3"/><circle class="bf" cx="15" cy="16" r="1.300"/></svg>
    </div>

    <div class="hint">
      <svg class="hi" viewBox="0 0 16 16"><path d="M1 15l5-5M6 10H2M6 10v4M15 1l-5 5M10 6h4M10 6V2"/></svg>
      <span>请输入无标注的吊筋信息&lt;右键识别/<b>Esc</b>放弃&gt;</span>
    </div>
  </section>

  <div class="split split2"><i></i></div>

  <aside class="pr">
    <div class="strip"></div>
    <div class="prt">显示设置</div>
    <div class="prtabs"><span class="rt on">图元显示</span><span class="rt">楼层显示</span></div>
    <div class="rtbl">
      <div class="rh">图层构件</div>
      <div class="rrows">
        <div class="rr">砌体柱</div>
        <div class="rr end">约束边缘非阴影区</div>
        <div class="rg"><i class="mn"></i>墙</div>
        <div class="rr">剪力墙</div>
        <div class="rr">人防门框墙</div>
        <div class="rr">砌体墙</div>
        <div class="rr">砌体加筋</div>
        <div class="rr">保温墙</div>
        <div class="rr">暗梁</div>
        <div class="rr">墙垛</div>
        <div class="rr end">幕墙</div>
        <div class="rg"><i class="mn"></i>门窗洞</div>
        <div class="rr">门</div>
        <div class="rr">窗</div>
        <div class="rr">门联窗</div>
        <div class="rr">墙洞</div>
        <div class="rr">带形窗</div>
        <div class="rr">带形洞</div>
        <div class="rr">飘窗</div>
        <div class="rr">老虎窗</div>
        <div class="rr">过梁</div>
        <div class="rr end">壁龛</div>
        <div class="rg"><i class="mn"></i>梁</div>
        <div class="rr">梁</div>
        <div class="rr">连梁</div>
        <div class="rr end">圈梁</div>
        <div class="rg"><i class="mn"></i>板</div>
        <div class="rr">现浇板</div>
        <div class="rr">螺旋板</div>
        <div class="rr">坡道</div>
        <div class="rr">柱帽</div>
        <div class="rr">板洞</div>
        <div class="rr">板受力筋</div>
        <div class="rr">板负筋</div>
      </div>
    </div>
  </aside>
</main>

<footer class="status">
  <span class="s1">4.2</span>
  <span class="s2">标高：14.95~19.15</span>
  <span class="s3">选中图元：0</span>
  <span class="s4">隐藏图元：0</span>
  <span class="sb w24"><svg class="si" viewBox="0 0 16 16"><path d="M3 1v13h11M3 10h3v4"/></svg></span>
  <span class="sb act bw m5"><svg class="si" viewBox="0 0 16 16"><rect x="2.500" y="2.500" width="11" height="12" rx="2"/><circle class="bf" cx="3" cy="2.500" r="1.500"/></svg><i class="ar"></i></span>
  <span class="sb m7"><svg class="si sg" viewBox="0 0 16 16"><path d="M2 1l12 14M14 1L2 15"/></svg></span>
  <span class="sb bw m3"><svg class="si" viewBox="0 0 16 16"><path d="M2 12h11M2 12l9-9M7 12a6 6 0 0 0-2-4M2 15h12"/></svg><i class="ar"></i></span>
  <span class="sb bw m4"><svg class="si" viewBox="0 0 16 16"><path d="M3 1v6M0 4h6"/><rect class="kf" x="6" y="9" width="9" height="4"/></svg><i class="ar"></i></span>
  <span class="sb act w23 m4"><svg class="si" viewBox="0 0 16 16"><rect class="fb" x="2" y="2" width="9" height="12"/><path d="M4 1h8v11" /><path class="fb" d="M12 10l3 3-3 1z"/></svg></span>
  <span class="sb w23"><svg class="si" viewBox="0 0 16 16"><path d="M2 15V8c0-3 3-5 10-6"/><circle cx="13" cy="2" r="1"/><path class="kf" d="M10 8l4 3-4 2z"/></svg></span>
</footer>

<div class="task">
  <i class="t1"></i><i class="t2"></i><i class="t3"></i><i class="t4"></i><i class="t5"></i>
  <span class="t6"><i></i></span>
  <i class="t7"></i><i class="t8"></i>
</div>
</body>
</html>
```
FILE: styles.css
```css
*{box-sizing:border-box}
html,body{margin:0;padding:0}
body{width:1706px;height:1046px;overflow:hidden;background:#f0f0f0;color:#3c3c3c;font:12px/16px "Noto Sans","Noto Sans CJK SC",sans-serif;display:flex;flex-direction:column}
i{display:block;font-style:normal}
svg{display:block}
.defs{position:absolute}

.b{stroke:#2e80ee}
.r{stroke:#e03030}
.fl{fill:#d0e3fb}
.wf{fill:#fff}
.fb{fill:#2e80ee;stroke:none}
.bf{fill:#2e80ee;stroke:none}
.gf{fill:#c8c8c8;stroke:none}
.kf{fill:#5b6470;stroke:none}
.red{fill:#f01010;stroke:none}

.ar{width:0;height:0;border-style:solid;border-width:3px 3px 0;border-color:#8a8a8a transparent transparent;margin-left:7px;flex:none}

/* title bar */
.top{height:17px;flex:none;background:#fdfdfd;display:flex;overflow:hidden}
.qa{width:660px;flex:none;display:flex;align-items:flex-start;gap:10px}
.logo{width:3px;height:3px;background:#2e80ee;border-radius:0 0 3px 0;margin-right:10px}
.q{width:16px;height:16px;flex:none;margin-top:-2px;fill:none;stroke:#5b6470}
.qg{display:flex;align-items:center;margin-top:-2px;height:16px}
.qg .q{margin:0}
.qg .ar{margin-left:4px}
.qg.off .q{stroke:#c0c0c0}
.qg.off .ar{border-top-color:#c0c0c0}
.qs{margin-left:-2px}
.dn{margin:5px 0 0}
.title{line-height:14px;white-space:nowrap;color:#333;letter-spacing:.25px}

/* menu */
.menu{height:20px;flex:none;background:#fdfdfd;display:flex;align-items:center}
.corner{width:0;height:0;margin:5px 0 0 6px;border-style:solid;border-width:0 0 4px 4px;border-color:transparent transparent #666}
.tabs{display:flex;gap:26px;margin-left:21px}
.tabs span{line-height:19px;white-space:nowrap}
.tabs .on{background:#2f8bf6;color:#fff;border-radius:10px;padding:0 13px;margin:0 -13px}
.notice{margin-left:auto;width:278px;height:15px;border:1px solid #e2e2e2;border-right:0;border-radius:2px;background:#fff;overflow:hidden;white-space:nowrap;color:#222;line-height:13px}
.notice span{display:block;margin-left:-4px}

/* ribbon */
.ribbon{height:98px;flex:none;background:#fff;border-top:1px solid #eee;border-bottom:1px solid #d8d8d8;display:flex;padding-top:1px}
.grp{height:92px;margin-top:1px;border-right:1px solid #dcdcdc;display:flex;flex-direction:column;flex:none}
.body{height:72px;display:flex}
.lbl{height:20px;padding-top:1px;display:flex;align-items:center;justify-content:center;color:#555;white-space:nowrap}
.g1{width:201px}.g2{width:194px}.g3{width:276px}.g4{width:237px}.g5{width:67px}.g6{width:249px}.g7{width:79px}.g8{width:403px;border-right:0}
.g1 .lbl{padding-right:26px}
.lblr{padding-left:90px}
.col{display:flex;flex-direction:column;flex:none}
.it{height:23px;display:flex;align-items:center;white-space:nowrap}
.i{width:16px;height:16px;flex:none;margin-right:3px;fill:none;stroke:#5b6470;stroke-width:1}
.ck{width:14px;height:14px;flex:none;margin-right:4px}
.off{color:#bdbdbd}
.off .i,.i.off{stroke:#c8c8c8}
.frag{width:8px;height:69px;display:flex;justify-content:flex-end;align-items:center;overflow:hidden;margin-right:13px;white-space:nowrap;flex:none;padding-top:15px}
.frag span{flex:none}
.g1 .c1{width:98px}
.g1 .c1 .i{margin-right:2px}
.g2 .body{padding-left:8px}.g2 .c1{width:79px}
.g3 .body{padding-left:8px}.g3 .c1{width:67px}.g3 .c2{width:112px}
.g4 .body{padding-left:9px}.g4 .c1{width:53px}.g4 .c2{width:54px}.g4 .c3{width:63px}
.g5 .body{padding-left:8px}.g5 .c1{width:32px}
.g6 .body{padding-left:6px}.g6 .bigb{width:48px}.g6 .c2{width:101px}
.g8 .body{padding-left:9px}.g8 .c1{width:86px}.g8 .c2{width:102px}.g8 .c3{width:91px}.g8 .c4{width:98px}
.big{display:flex;flex-direction:column;align-items:center;flex:none;white-space:nowrap}
.bigb{padding-top:3px}
.bi{width:30px;height:32px;fill:none}
.b2{stroke:#2e80ee;stroke-width:2.5;fill:none}
.bigb span{margin-top:3px}
.bigs{width:100%;padding-top:3px}
.g7 .body{padding:0 18px 0 4px}
.bi2{width:32px;height:33px;fill:none}
.k2{stroke:#4a5260;stroke-width:2.5;fill:none}
.b3{stroke:#2e80ee;stroke-width:2.5;fill:none}
.bigs span{margin-top:2px}
.bigs .ar{margin:5px 0 0;border-width:4px 3px 0}
.sel{background:#c3daf3;border-radius:3px;margin-left:-2px;padding-left:2px;height:20px;margin-top:1px;width:75px;color:#333}

/* combos */
.combos{height:27px;flex:none;background:#f0f0f0;display:flex;gap:4px;padding-top:3px}
.cmb{width:98px;height:21px;background:#fff;border:1px solid #e4e4e4;border-radius:3px;display:flex;align-items:center;justify-content:space-between;padding:0 6px 0 3px}
.c0{width:69px;border-left:0;padding-left:0}
.cmb .ar{border-top-color:#666}

/* main */
.main{height:835px;flex:none;display:flex;background:#f0f0f0}
.strip{height:10px;background:#e6e6e6;margin-top:1px;display:flex;justify-content:flex-end;align-items:center;flex:none}
.x{color:#999;font-size:14px;line-height:10px;padding-right:3px}
.p1{width:98px;flex:none;background:#fff;border-right:1px solid #ddd;display:flex;flex-direction:column;margin-right:5px}
.p1t{height:23px;border-bottom:1px solid #e2e2e2;background:#f6f6f6;display:flex;justify-content:flex-end;align-items:center;width:97px;overflow:hidden;padding-right:84px;color:#777;flex:none}
.p1t span{flex:none;white-space:nowrap}
.p1b{height:28px;border-bottom:1px solid #e2e2e2;display:flex;gap:4px;align-items:center;flex:none;margin-left:-4px}
.tg{width:24px;height:22px;background:#c3daf3;border-radius:3px;display:flex;align-items:center;justify-content:center}
.tgi{width:16px;height:16px;fill:none}
.p1l{flex:1;display:flex;min-height:0;overflow:hidden}
.list{width:84px;flex:none;padding-top:4px}
.cat{height:25px;margin-bottom:3px;background:#ececec;display:flex;align-items:center;white-space:nowrap}
.clip{width:8px;display:flex;justify-content:flex-end;overflow:hidden;flex:none}
.clipw{width:20px}
.rd{width:6px;height:6px;background:#f01010;border-radius:50%;margin:-12px 0 0 3px}
.rd0{margin-left:-3px}
.lk2{width:9px;height:11px;margin-left:2px;flex:none}
.pill{background:linear-gradient(#f5d59a,#edc07a);color:#8a4e10;border-radius:10px 0 0 10px;padding:0 0 0 7px;width:50px;height:22px;line-height:22px;margin-left:3px;overflow:hidden;flex:none}
.itm{height:25px;margin-bottom:3px;display:flex;align-items:center;white-space:nowrap;overflow:hidden}
.cur{background:#cfe3fa}
.bit{width:4px;height:14px;border:1px solid #2e80ee;border-left:0;border-radius:0 2px 2px 0;margin-right:14px;flex:none}
.vs{background:#f6f6f6;flex:none;display:flex;justify-content:center}
.vs i{background:#cbcbcb;border-radius:4px;width:8px}
.vs1{width:13px;background:#fff}
.vs1 i{margin-top:12px;height:646px}

.p2col{width:233px;flex:none;display:flex;flex-direction:column;gap:5px}
.p2,.p3{background:#fff;border:1px solid #ddd;border-top:0;display:flex;flex-direction:column}
.p2{height:506px;flex:none}
.p3{flex:1}
.p3 .strip{height:11px}
.ptabs{height:24px;flex:none;background:#f0f0f0;display:flex;padding-top:1px;border-bottom:1px solid #ddd}
.pt{width:65px;height:22px;background:#dedede;color:#8a8a8a;font-weight:700;display:flex;align-items:center;justify-content:center}
.pt.on{background:#f2f2f2;color:#333;border:1px solid #cfcfcf;border-bottom:0}
.ptb{height:28px;flex:none;display:flex;align-items:center;padding-left:4px;border-bottom:1px solid #eee}
.tb{display:flex;align-items:center;white-space:nowrap}
.tb .i{margin-right:5px}
.tb1{width:90px}.tb2{width:67px}.tb3{width:58px}
.more{width:10px;height:19px;border:1px solid #e4e4e4;border-radius:3px;font-size:7px;line-height:17px;text-align:center;color:#555;overflow:hidden;letter-spacing:-1px}
.tblwrap{flex:1;display:flex;min-height:0}
.tbl{width:217px;flex:none;display:flex;flex-direction:column;overflow:hidden}
.thead{height:25px;flex:none;display:flex;margin-top:1px}
.hn{width:191px;background:#7db8f8;color:#fff;font-weight:700;display:flex;align-items:center;justify-content:center}
.hl{width:26px;padding-left:7px;display:flex;align-items:center;white-space:nowrap;overflow:hidden}
.tbody{height:404px;flex:none;overflow:hidden}
.row{height:21px;display:flex;align-items:center;border-bottom:1px solid #e2e2e2;white-space:nowrap}
.grow{padding-left:2px}
.mn{width:13px;height:13px;border:1px solid #8a8a8a;border-radius:2px;position:relative;margin-right:6px;flex:none;background:#fff}
.mn::after{content:"";position:absolute;left:2px;right:2px;top:5px;height:1px;background:#666}
.nm{width:191px;flex:none;height:20px;display:flex;align-items:center;position:relative}
.ch{padding-left:31px}
.ch::before{content:"";position:absolute;left:9px;top:-1px;bottom:-1px;width:1px;background:#e0e0e0}
.ch::after{content:"";position:absolute;left:9px;top:10px;width:16px;height:1px;background:#e0e0e0}
.last::before{bottom:9px}
.lk{width:26px;height:20px;border-left:1px solid #e2e2e2;display:flex;align-items:center;padding-left:10px}
.lk svg{width:14px;height:16px;flex:none}
.act .nm{background:#d2e6fb;outline:2px solid #5e6b7a;outline-offset:-2px}
.act .lk{background:#d2e6fb}
.hs{height:14px;flex:none;display:flex;align-items:center;background:#fff}
.hl1{width:0;height:0;border-style:solid;border-width:4px 4px 4px 0;border-color:transparent #444 transparent transparent;margin-left:6px}
.hth{width:125px;height:8px;background:#cbcbcb;border-radius:4px;margin-left:4px}
.hl2{width:0;height:0;border-style:solid;border-width:4px 0 4px 4px;border-color:transparent transparent transparent #444;margin-left:70px}
.vs2{width:14px;background:#fff}
.vs2 i{margin-top:14px;height:293px}
.ptb3{padding-left:5px;height:27px;border-bottom:0}
.ptb3 .i{margin-right:4px}
.tc1{width:104px}
.lt{border-top:1px solid #ddd}
.lr{display:grid;grid-template-columns:50px 36px 1fr;height:21px;border-bottom:1px solid #e2e2e2}
.lh{height:20px}
.lr span{display:flex;align-items:center;justify-content:center;border-right:1px solid #e2e2e2;white-space:pre}
.lr .ck{margin:0}
.lr .ln{justify-content:flex-start;padding-left:5px;border-right:0}
.tri{width:0;height:0;border-style:solid;border-width:4px 0 4px 4px;border-color:transparent transparent transparent #888}

.split{width:4px;flex:none;display:flex;align-items:flex-start}
.split i{width:4px;height:100px;background:#6d737a;margin-top:368px}

/* canvas */
.canvas{width:1258px;flex:none;position:relative;background:#000;overflow:hidden}
.cad{width:1258px;height:835px}
.gr{fill:#2bdf2e}
.cy{stroke:#20e8e0;stroke-width:1;fill:none;shape-rendering:crispEdges}
.cyd{stroke:#12d0d0;stroke-width:1.5;fill:none;stroke-dasharray:26 10;shape-rendering:crispEdges}
.cl{stroke:#8a9a88;stroke-width:1;fill:none;shape-rendering:crispEdges}
.yl{stroke:#ffff00;stroke-opacity:.6;stroke-width:1.5;fill:none}
.rd2{stroke:#f80000;stroke-width:2;fill:none}
.blu{stroke:#1010e0;stroke-width:1;fill:none}
.wh{stroke:#fff;stroke-width:1.5;fill:none}
.pk{stroke:#d87878;stroke-width:1;fill:none}
.tl{stroke:#008080;stroke-width:1;fill:none}
.t,.tp,.tw{font-family:"Inter","Liberation Sans",sans-serif}
.t{font-size:30px;fill:#00a4a4;font-weight:200}
.tp{font-size:31px;fill:#d87070;font-weight:200}
.tw{font-size:34px;fill:#fff;font-weight:300}
.ax-g{stroke:#00ff00;stroke-width:2.5}
.ax-gf{fill:#00e800}
.ax-r{stroke:#ff0000;stroke-width:2.5}
.ax-rf{fill:#ff0000}
.ay,.ax{font-family:"Inter",sans-serif;font-weight:200;font-size:18px}
.ay{fill:#00ff00}
.ax{fill:#ff0000}

.fl-panel{position:absolute;left:0;top:0;width:114px;height:84px;background:#1f4e7e;border:1px solid #2a5f9a;padding:0 7px}
.fl-h{height:12px;margin:0 -7px;background:#173d63;display:flex;justify-content:flex-end;padding-right:3px;line-height:12px;color:#bcd4ec;font-weight:700}
.fl-b{height:26px;margin-top:8px;border:1px solid #17395e;background:#1f5486;color:#fff;display:flex;align-items:center;justify-content:center}
.fl-s{height:26px;margin-top:5px;display:flex;border:1px solid #17395e;background:#1f5486;color:#fff}
.fl-m{flex:1;display:flex;align-items:center;justify-content:center;border-right:1px solid #17395e}
.fl-a{width:16px;position:relative}
.fl-a::after{content:"";position:absolute;left:4px;top:10px;border-style:solid;border-width:4px 4px 0;border-color:#fff transparent transparent}

.dlg{position:absolute;left:1px;top:361px;width:235px;height:142px;background:#fff;border-radius:7px;padding:0 10px;border:1px solid #d8d8d8}
.dlg-h{height:39px;padding-bottom:5px;display:flex;align-items:center;justify-content:space-between;font-size:14px;color:#444}
.dlg-x{width:11px;height:11px;stroke:#888;fill:none}
.dlg-r{height:26px;display:flex;align-items:center;justify-content:space-between;margin-bottom:6px;white-space:nowrap}
.inp{width:111px;height:26px;border:1px solid #ccc;border-radius:4px;padding:0 3px;display:flex;align-items:center;color:#333}
.dlg-f{display:flex;justify-content:flex-end;gap:6px}
.btn{width:80px;height:26px;border:1px solid #ccc;border-radius:4px;display:flex;align-items:center;justify-content:center;color:#333}
.pri{background:#2f80e3;border-color:#2f80e3;color:#fff}

.pal{position:absolute;right:0;top:0;width:33px;height:246px;background:#fff;border-radius:0 0 3px 3px;display:flex;flex-direction:column;align-items:center;padding-top:14px;box-shadow:0 0 1px #aaa}
.pi{width:20px;height:20px;fill:none;stroke:#5b6470;flex:none}
.pal .pi+.pi{margin-top:8px}
.par{width:0;height:0;border-style:solid;border-width:4px 3px 0;border-color:#666 transparent transparent;margin:8px 0;flex:none}
.psep{width:26px;height:1px;background:#666;margin:7px 0;flex:none}

.hint{position:absolute;left:0;right:0;bottom:0;height:27px;background:rgba(62,62,62,.73);color:#fff;display:flex;align-items:center;padding-left:495px;gap:4px;letter-spacing:.15px}
.hi{width:16px;height:16px;stroke:#fff;fill:none}
.hint b{font-weight:700}

/* right panel */
.pr{flex:1;background:#fff;border-left:1px solid #ccc;display:flex;flex-direction:column;overflow:hidden;min-width:0}
.pr .strip{background:#e6e6e6}
.prt{height:25px;flex:none;padding-left:9px;display:flex;align-items:center;font-weight:700;color:#8a8a8a;background:#f2f2f2}
.prtabs{height:26px;flex:none;display:flex;gap:4px;padding:2px 0 0 3px;background:#f2f2f2}
.rt{width:60px;height:24px;background:#dedede;border-radius:4px 4px 0 0;color:#777;display:flex;align-items:center;justify-content:center;white-space:nowrap;flex:none}
.rt.on{background:#fff;color:#2e80ee;border:1px solid #ccc;border-bottom:0}
.rtbl{margin:2px 0 0 3px;height:731px;border-top:1px solid #e2e2e2;width:120px;flex:none}
.rh{height:21px;padding-left:47px;display:flex;align-items:center;border-left:1px solid #ddd;border-bottom:1px solid #e2e2e2;white-space:nowrap}
.rrows{height:710px;overflow:hidden;border-bottom:2px solid #e2e2e2}
.rr,.rg{height:21px;border-bottom:1px solid #e2e2e2;border-left:1px solid #ddd;display:flex;align-items:center;white-space:nowrap;position:relative}
.rr{padding-left:40px}
.rr::before{content:"";position:absolute;left:7px;top:-1px;bottom:-1px;width:1px;background:#e4e4e4}
.rr::after{content:"";position:absolute;left:18px;top:9px;width:16px;height:1px;background:#ddd;box-shadow:-1px 0 0 #ddd}
.rg{padding-left:11px}
.rg .mn{margin-right:6px}
.rg::before{content:"";position:absolute;left:2px;width:9px;top:10px;height:1px;background:#e4e4e4}

/* status */
.status{height:31px;flex:none;background:#fbfbfb;display:flex;align-items:center;border-bottom:1px solid #b8bcc4;white-space:nowrap}
.s1,.s2,.s3,.s4{padding-top:2px}
.s1{margin-left:10px;width:50px}
.s2{width:140px;letter-spacing:.5px}
.s3{width:110px}
.s4{width:111px}
.sb{height:25px;width:25px;margin-right:3px;background:#fff;border:1px solid #aeb2b8;border-radius:3px;display:flex;align-items:center;justify-content:center;flex:none}
.w24{width:24px}
.w23{width:23px}
.bw{width:36px;justify-content:flex-start;padding-left:3px}
.bw .ar{margin-left:4px;border-top-color:#555}
.m3{margin-right:3px}
.m4{margin-right:4px}
.m5{margin-right:6px}
.m7{margin-right:7px}
.act{background:#d6e6fa;border-color:#5a9ae8}
.si{width:16px;height:16px;fill:none;stroke:#5b6470;flex:none}
.sg{stroke:#9aa0a8}

/* taskbar */
.task{flex:1;background:linear-gradient(90deg,#e8f0f8,#d4dff5 50%,#d8e2f4);display:flex;align-items:flex-start;padding-left:763px;overflow:hidden}
.task i{flex:none}
.t1{width:23px;height:12px;margin:12px 27px 0 0;background:#3fb0f0}
.t2{width:17px;height:12px;margin:12px 22px 0 0;background:#fff;border-radius:2px 2px 0 0}
.t3{width:21px;height:12px;margin:12px 22px 0 0;background:#1a7fd0;border-radius:3px 3px 0 0}
.t4{width:23px;height:12px;margin:12px 22px 0 0;background:linear-gradient(#d99a1a,#f2cf6a)}
.t5{width:22px;height:22px;margin:12px 15px 0 0;background:#2bb5c0;border-radius:50%}
.t6{width:36px;height:18px;margin:5px 14px 0 0;background:#eef4fc;border-radius:4px 4px 0 0;display:flex;justify-content:center;flex:none}
.t6 i{width:18px;height:10px;margin-top:7px;background:#55b0ea}
.t7{width:23px;height:12px;margin:11px 22px 0 0;background:#1e5fae;border-top:2px solid #8a8f96;border-radius:2px 2px 0 0}
.t8{width:21px;height:21px;margin:11px 0 0;background:#0f4ea0;border-radius:50%}
```
